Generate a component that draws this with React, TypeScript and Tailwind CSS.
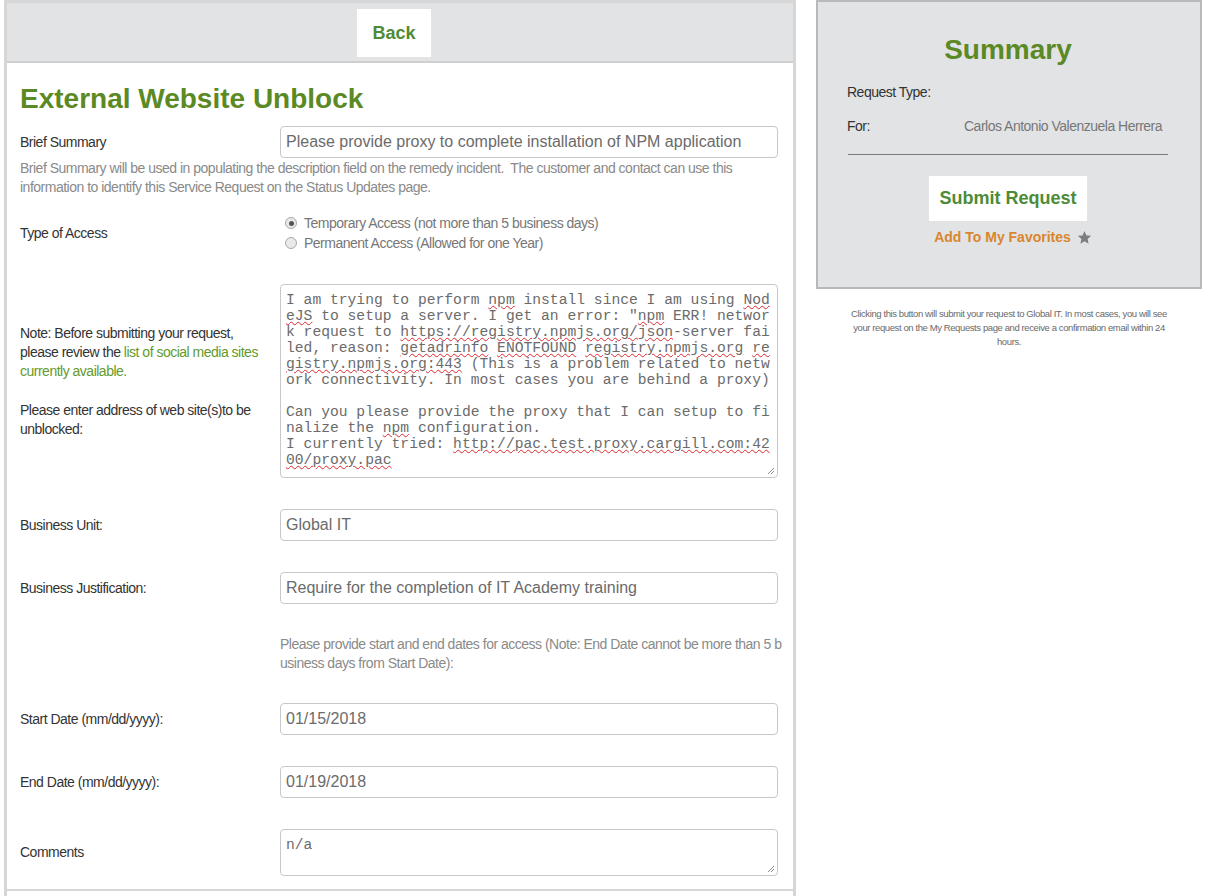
import React from 'react';

const cond = "font-['Liberation_Sans',sans-serif] tracking-[-0.5px]";

const U = ({ children }: { children: React.ReactNode }) => (
  <span className="underline decoration-wavy decoration-[#e0262b] decoration-1 underline-offset-[1px]">{children}</span>
);

const Grip = () => (
  <svg className="absolute right-[2px] bottom-[2px]" width="9" height="9" viewBox="0 0 9 9">
    <path d="M8 2 L2 8 M8 5 L5 8" stroke="#888" strokeWidth="1" />
  </svg>
);

const Field = ({ value }: { value: string }) => (
  <div className="h-[32px] border border-[#c8c8c8] rounded-[4px] pl-[5px] flex items-center text-[16px] text-[#6b6b6b] font-['Liberation_Sans',sans-serif] bg-white">
    {value}
  </div>
);

const Radio = ({ checked, label }: { checked?: boolean; label: string }) => (
  <div className="flex items-center h-[20px]">
    <span className="w-[12px] h-[12px] rounded-full border border-[#a8a8a8] bg-[#e9e9e9] flex items-center justify-center ml-[5px] mr-[7px]">
      {checked && <span className="w-[5px] h-[5px] rounded-full bg-[#555]" />}
    </span>
    <span className={`${cond} text-[14px] text-[#777]`}>{label}</span>
  </div>
);

const Row = ({ label, children, className = '' }: { label?: React.ReactNode; children: React.ReactNode; className?: string }) => (
  <div className={`grid grid-cols-[260px_1fr] items-center ${className}`}>
    <div className={`${cond} text-[14px] text-[#333] leading-[19px]`}>{label}</div>
    <div>{children}</div>
  </div>
);

const App = () => {
  return (
    <div className="flex items-start gap-[20px] pl-[4px] bg-white min-h-[896px]">
      {/* form panel */}
      <div className="w-[792px] border-[3px] border-b-0 border-[#d6d6d6] shrink-0">
        <div className="bg-[#e2e3e5] h-[60px] flex items-center justify-center pr-[12px] border-b-2 border-[#cfcfcf]">
          <button className="bg-white h-[48px] w-[74px] mt-[2px] text-[18px] font-bold text-[#4d8b37] font-['Liberation_Sans',sans-serif]">
            Back
          </button>
        </div>

        <div className="pl-[13px] pr-[15px] pt-[20px]">
          <h1 className="text-[28px] leading-[32px] font-bold text-[#5b8a25] font-['Liberation_Sans',sans-serif]">
            External Website Unblock
          </h1>

          <Row label="Brief Summary" className="mt-[11px]">
            <Field value="Please provide proxy to complete installation of NPM application" />
          </Row>
          <p className={`${cond} text-[14px] leading-[19px] text-[#8a8a8a] whitespace-nowrap mt-[1px]`}>
            Brief Summary will be used in populating the description field on the remedy incident.&nbsp; The customer and contact can use this
            <br />
            information to identify this Service Request on the Status Updates page.
          </p>

          <Row label="Type of Access" className="mt-[16px]">
            <Radio checked label="Temporary Access (not more than 5 business days)" />
            <Radio label="Permanent Access (Allowed for one Year)" />
          </Row>

          <Row
            className="mt-[31px]"
            label={
              <div className="whitespace-nowrap">
                <p>
                  Note: Before submitting your request,
                  <br />
                  please review the <span className="text-[#649a2c]">list of social media sites</span>
                  <br />
                  <span className="text-[#649a2c]">currently available.</span>
                </p>
                <p className="mt-[20px]">
                  Please enter address of web site(s)to be
                  <br />
                  unblocked:
                </p>
              </div>
            }
          >
            <div className="relative h-[194px] border border-[#c8c8c8] rounded-[4px] pl-[5px] pt-[7px] text-[14.67px] leading-[16px] text-[#6b6b6b] font-['Liberation_Mono',monospace] whitespace-pre">
              <div>I am trying to perform <U>npm</U> install since I am using <U>Nod</U></div>
              <div><U>eJS</U> to setup a server. I get an error: "<U>npm</U> ERR! networ</div>
              <div>k request to <U>https://registry.npmjs.org/json</U>-server fai</div>
              <div>led, reason: <U>getadrinfo</U> <U>ENOTFOUND</U> <U>registry.npmjs.org</U> <U>re</U></div>
              <div><U>gistry.npmjs.org:443</U> (This is a problem related to netw</div>
              <div>ork connectivity. In most cases you are behind a proxy)</div>
              <div>&nbsp;</div>
              <div>Can you please provide the proxy that I can setup to fi</div>
              <div>nalize the <U>npm</U> configuration.</div>
              <div>I currently tried: <U>http://pac.test.proxy.cargill.com:42</U></div>
              <div><U>00/proxy.pac</U></div>
              <Grip />
            </div>
          </Row>

          <Row label="Business Unit:" className="mt-[31px]">
            <Field value="Global IT" />
          </Row>

          <Row label="Business Justification:" className="mt-[31px]">
            <Field value="Require for the completion of IT Academy training" />
          </Row>

          <Row className="mt-[31px]">
            <p className={`${cond} text-[14px] leading-[19px] text-[#8a8a8a] whitespace-nowrap`}>
              Please provide start and end dates for access (Note: End Date cannot be more than 5 b
              <br />
              usiness days from Start Date):
            </p>
          </Row>

          <Row label="Start Date (mm/dd/yyyy):" className="mt-[30px]">
            <Field value="01/15/2018" />
          </Row>

          <Row label="End Date (mm/dd/yyyy):" className="mt-[31px]">
            <Field value="01/19/2018" />
          </Row>

          <Row label="Comments" className="mt-[31px]">
            <div className="relative h-[47px] border border-[#c8c8c8] rounded-[4px] pl-[5px] pt-[7px] text-[14.67px] leading-[16px] text-[#6b6b6b] font-['Liberation_Mono',monospace]">
              n/a
              <Grip />
            </div>
          </Row>
        </div>
        <div className="mt-[13px] border-t-2 border-[#d6d6d6] h-[40px]" />
      </div>

      {/* summary panel */}
      <div className="w-[386px] shrink-0">
        <div className="bg-[#e2e3e5] border-2 border-[#b9b9b9] pt-[32px] pb-[39px] pl-[29px] pr-[31px]">
          <h2 className="text-center text-[28px] leading-[32px] font-bold text-[#5b8a25] font-['Liberation_Sans',sans-serif]">
            Summary
          </h2>
          <div className={`${cond} text-[14px] text-[#333] mt-[16px]`}>
            <div className="h-[20px] flex items-center">Request Type:</div>
            <div className="h-[20px] flex items-center mt-[14px]">
              <span className="w-[117px] shrink-0">For:</span>
              <span className="text-[#777] whitespace-nowrap">Carlos Antonio Valenzuela Herrera</span>
            </div>
          </div>
          <div className="border-t border-[#7a7a7a] mt-[18px] ml-[1px] mr-[1px]" />
          <div className="flex flex-col items-center mt-[21px]">
            <button className="bg-white h-[45px] px-[10px] text-[18px] font-bold text-[#4d8b37] font-['Liberation_Sans',sans-serif]">
              Submit Request
            </button>
            <div className="flex items-center mt-[6px] ml-[10px]">
              <span className="text-[14px] font-bold text-[#d9862e] font-['Liberation_Sans',sans-serif]">Add To My Favorites</span>
              <svg className="ml-[6px]" width="15" height="15" viewBox="0 0 24 24">
                <path
                  d="M12 1.5l3.1 7.1 7.6.7-5.8 5.1 1.7 7.6L12 18l-6.6 4 1.7-7.6-5.8-5.1 7.6-.7z"
                  fill="#7d7d7d"
                />
              </svg>
            </div>
          </div>
        </div>
        <p className="font-['Liberation_Sans',sans-serif] tracking-[-0.4px] text-[9.5px] leading-[14px] text-[#6a6a6a] text-center mt-[18px] whitespace-nowrap">
          Clicking this button will submit your request to Global IT. In most cases, you will see
          <br />
          your request on the My Requests page and receive a confirmation email within 24
          <br />
          hours.
        </p>
      </div>
    </div>
  );
};

export default App;
